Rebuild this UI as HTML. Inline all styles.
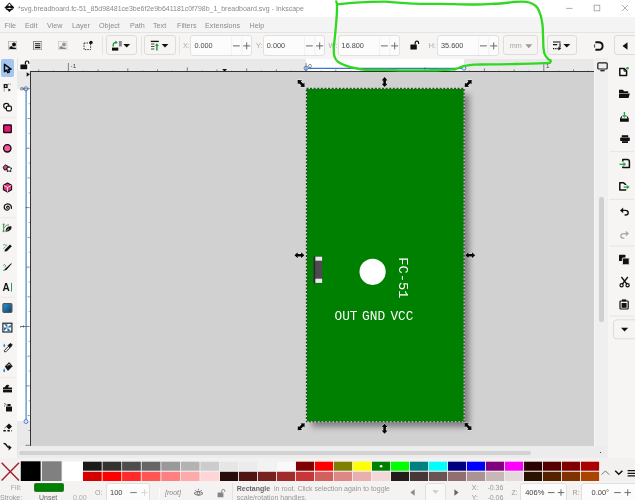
<!DOCTYPE html>
<html><head><meta charset="utf-8"><title>Inkscape</title>
<style>
html,body{margin:0;padding:0;}
body{width:635px;height:500px;overflow:hidden;position:relative;background:#f6f5f4;font-family:"Liberation Sans",sans-serif;color:#555;}
.a{position:absolute;}
.t{position:absolute;white-space:nowrap;line-height:1;}
#title{left:0;top:0;width:635px;height:17.2px;background:#fff;}
#menu{left:0;top:17.2px;width:635px;height:15.4px;background:#f4f4f4;}
#menu .t{font-size:7.2px;top:5.2px;color:#8c8c8c;}
#tb{left:0;top:32px;width:635px;height:26.5px;background:#f6f5f4;border-top:1px solid #e4e4e4;box-sizing:border-box;}
.box{position:absolute;top:35.4px;height:20.2px;box-sizing:border-box;border:1px solid #e2e0de;border-radius:3px;background:#fcfcfc;}
.btn{position:absolute;top:35.4px;height:20px;box-sizing:border-box;border:1px solid #dedcda;border-radius:3px;background:#f6f5f4;}
.lbl{font-size:7.2px;color:#a8a8a8;top:42px;}
.val{font-size:7.3px;color:#4a4a4a;top:41.8px;}
.pm{font-size:11px;color:#888;top:39.5px;font-weight:normal;}
#canvas{left:30.4px;top:71.7px;width:564.1px;height:374px;background:#d1d1d1;overflow:hidden;}
#hr{left:30.4px;top:58.6px;width:564.1px;height:13.4px;z-index:2;background:#e9e9e9;border-bottom:1px solid #333;box-sizing:border-box;overflow:hidden;}
#vr{left:17.3px;top:71px;width:13.7px;height:374.7px;z-index:2;background:#e9e9e9;border-right:1px solid #333;box-sizing:border-box;overflow:hidden;}
#vs{left:594.5px;top:58.3px;width:13.5px;height:400px;background:#efefef;}
#hs{left:17.3px;top:445.7px;width:590px;height:12px;background:#ececec;}
#pal{left:0;top:457.5px;width:635px;height:23.5px;background:#f2f1f0;}
#status{left:0;top:481px;width:635px;height:19px;background:#f4f3f2;}
.st{font-size:7px;color:#999;}
</style></head><body><div id="root" style="position:absolute;left:0;top:0;width:635px;height:500px;will-change:transform">
<!-- title bar -->
<div id="title" class="a">
 <svg class="a" style="left:3.6px;top:2.4px" width="10.8" height="10.8" viewBox="0 0 12 12"><path d="M6 0.5 L11.3 6 Q11.8 7 10.5 7.3 L9 7.6 L10 8.6 L8 9.2 L6 11.5 L4 9.2 L2 8.6 L3 7.6 L1.5 7.3 Q0.2 7 0.7 6 Z" fill="#111"/><path d="M6 2 L8.2 4.3 L7 4 L6 4.8 L5 4 L3.8 4.3 Z" fill="#fff"/><path d="M3 7.2 Q6 5.8 9 7.2 Q6 8.2 3 7.2Z" fill="#fff"/></svg>
 <span class="t" id="ttxt" style="left:18px;top:4.5px;font-size:7.6px;color:#8a8a8a;transform:scaleX(0.919);transform-origin:0 0;">*svg.breadboard.fc-51_85d98481ce3be6f2e9b641181c0f798b_1_breadboard.svg - Inkscape</span>
 <svg class="a" style="left:560px;top:0" width="75" height="18" viewBox="0 0 75 18"><g stroke="#9a9a9a" stroke-width="0.8" fill="none"><path d="M6 8.4H12.6"/><rect x="34.2" y="5.2" width="5.6" height="5.6"/><path d="M62 5L68 11M68 5L62 11"/></g></svg>
</div>
<!-- menu -->
<div id="menu" class="a">
 <span class="t" style="left:4.5px">File</span><span class="t" style="left:25px">Edit</span><span class="t" style="left:47px">View</span><span class="t" style="left:72px">Layer</span><span class="t" style="left:99px">Object</span><span class="t" style="left:130px">Path</span><span class="t" style="left:153px">Text</span><span class="t" style="left:177px">Filters</span><span class="t" style="left:205px">Extensions</span><span class="t" style="left:249.5px">Help</span>
</div>
<!-- toolbar -->
<div id="tb" class="a"></div>
<div id="tbitems">
<svg class="a" style="left:7.8px;top:40.5px" width="9.4" height="9.4" viewBox="0 0 10 10"><rect x="0.5" y="0.5" width="9" height="9" fill="#f0f0f0" stroke="#b5b5b5" stroke-width="0.9"/><circle cx="6.4" cy="3.8" r="2.1" fill="#111"/><path d="M1.6 8.4V6.4L3.8 5.2l1.6 1.6 3 0.4v1.2z" fill="#111"/></svg>
<svg class="a" style="left:32.8px;top:40.5px" width="9.4" height="9.4" viewBox="0 0 10 10"><rect x="0.5" y="0.5" width="9" height="9" fill="#ececec" stroke="#8a8a8a" stroke-width="1"/><path d="M2.2 2.9H7.8M2.2 5H7.8M2.2 7.1H7.8" stroke="#111" stroke-width="1.2"/></svg>
<svg class="a" style="left:58.4px;top:40.5px" width="9.4" height="9.4" viewBox="0 0 10 10"><rect x="0.5" y="0.5" width="9" height="9" fill="#f2f2f2" stroke="#cfcfcf" stroke-width="0.9"/><circle cx="6.4" cy="3.8" r="2.1" fill="#999"/><path d="M1.6 8.4V6.4L3.8 5.2l1.6 1.6 3 0.4v1.2z" fill="#888"/></svg>
<svg class="a" style="left:82.6px;top:40px" width="11" height="11" viewBox="0 0 11 11"><rect x="1" y="3" width="6.6" height="6.6" fill="none" stroke="#222" stroke-width="0.9" stroke-dasharray="1.5 1"/><circle cx="8" cy="2.4" r="1.7" fill="#111"/></svg>
<div class="a" style="left:102.0px;top:36px;width:0.8px;height:19px;background:#e6e4e2"></div>
<div class="a" style="left:141.0px;top:36px;width:0.8px;height:19px;background:#e6e4e2"></div>
<div class="a" style="left:179.3px;top:36px;width:0.8px;height:19px;background:#e6e4e2"></div>
<div class="btn" style="left:105.7px;width:31.8px;"></div>
<svg class="a" style="left:110px;top:39px" width="22" height="13" viewBox="110 39 22 13"><rect x="112" y="47.6" width="6.3" height="3" fill="#111"/><rect x="118.9" y="41" width="2.9" height="5.5" fill="#888"/><path d="M113.2 46.6V45Q113.2 42.6 116 42.4" stroke="#1e9e3c" stroke-width="1.4" fill="none"/><path d="M115.4 40.6L117.8 42.4L115.4 44.2Z" fill="#1e9e3c"/><path d="M123.3 43.9h6.8l-3.4 3.5z" fill="#111"/></svg>
<div class="btn" style="left:144.3px;width:31.4px;"></div>
<svg class="a" style="left:148px;top:39px" width="22" height="13" viewBox="148 39 22 13"><path d="M150.8 41.4H158.8" stroke="#111" stroke-width="1.3"/><path d="M151 44H154.4M151 46.5H154.4M151 49H154.4" stroke="#333" stroke-width="0.9"/><path d="M156.9 50.4V45" stroke="#1e9e3c" stroke-width="1.5"/><path d="M154.8 45.8L156.9 43.2L159 45.8Z" fill="#1e9e3c"/><path d="M161.6 43.9h6.8l-3.4 3.5z" fill="#111"/></svg>
<span class="t lbl" style="left:183.0px">X:</span>
<div class="box" style="left:190.4px;width:61.8px;"></div>
<span class="t val" style="left:194.4px">0.000</span>
<svg class="a" style="left:231.2px;top:35.5px" width="22" height="20" viewBox="0 0 22 20"><path d="M0.6 1V19M10.8 1V19" stroke="#efeeed" stroke-width="0.8"/><path d="M2 9.9H8.8" stroke="#6a6a6a" stroke-width="1"/><path d="M12.2 9.9H19.2M15.7 6.4V13.4" stroke="#6a6a6a" stroke-width="1"/></svg>
<span class="t lbl" style="left:256.0px">Y:</span>
<div class="box" style="left:262.8px;width:61.8px;"></div>
<span class="t val" style="left:266.8px">0.000</span>
<svg class="a" style="left:303.6px;top:35.5px" width="22" height="20" viewBox="0 0 22 20"><path d="M0.6 1V19M10.8 1V19" stroke="#efeeed" stroke-width="0.8"/><path d="M2 9.9H8.8" stroke="#6a6a6a" stroke-width="1"/><path d="M12.2 9.9H19.2M15.7 6.4V13.4" stroke="#6a6a6a" stroke-width="1"/></svg>
<span class="t lbl" style="left:328.6px">W:</span>
<div class="box" style="left:337.6px;width:62.4px;"></div>
<span class="t val" style="left:341.6px">16.800</span>
<svg class="a" style="left:379.0px;top:35.5px" width="22" height="20" viewBox="0 0 22 20"><path d="M0.6 1V19M10.8 1V19" stroke="#efeeed" stroke-width="0.8"/><path d="M2 9.9H8.8" stroke="#6a6a6a" stroke-width="1"/><path d="M12.2 9.9H19.2M15.7 6.4V13.4" stroke="#6a6a6a" stroke-width="1"/></svg>
<span class="t lbl" style="left:428.8px">H:</span>
<div class="box" style="left:437.0px;width:62.0px;"></div>
<span class="t val" style="left:441.0px">35.600</span>
<svg class="a" style="left:478.0px;top:35.5px" width="22" height="20" viewBox="0 0 22 20"><path d="M0.6 1V19M10.8 1V19" stroke="#efeeed" stroke-width="0.8"/><path d="M2 9.9H8.8" stroke="#6a6a6a" stroke-width="1"/><path d="M12.2 9.9H19.2M15.7 6.4V13.4" stroke="#6a6a6a" stroke-width="1"/></svg>
<svg class="a" style="left:410.4px;top:40.4px" width="10" height="10" viewBox="0 0 10 10"><rect x="0.4" y="4.6" width="6.4" height="4.8" rx="0.5" fill="#111"/><path d="M5.2 4.6V3Q5.2 1.2 6.9 1.2Q8.6 1.2 8.6 3V4" stroke="#111" stroke-width="1.2" fill="none"/></svg>
<div class="btn" style="left:502.7px;width:35.5px;"></div>
<span class="t lbl" style="left:509.8px;color:#a6a6a6">mm</span>
<svg class="a" style="left:524.6px;top:43.6px" width="8" height="5" viewBox="0 0 8 5"><path d="M0.3 0.3h7L3.8 4.2z" fill="#9a9a9a"/></svg>
<div class="btn" style="left:546.8px;width:29.8px;"></div>
<svg class="a" style="left:551.5px;top:39px" width="22" height="13" viewBox="0 0 22 13"><path d="M1 3H8.6M1 5.6H5.2M8 4.2V8.6" stroke="#111" stroke-width="1.1" fill="none"/><path d="M1 9.6H6.5" stroke="#111" stroke-width="1.3" stroke-dasharray="1.3 0.9"/><path d="M6.4 7.8l2.8 1.8-2.8 1.8z" fill="#111"/><path d="M11.4 5h6.8l-3.4 3.5z" fill="#111"/></svg>
<svg class="a" style="left:592px;top:39.5px" width="13" height="12" viewBox="0 0 13 12"><path d="M3.4 2.2H6.6Q10.6 2.2 10.6 6Q10.6 9.8 6.6 9.8H3.4" stroke="#111" stroke-width="1.9" fill="none"/><path d="M3.2 4.6Q1.6 5 2.6 6Q3.6 6.8 2 7.4" stroke="#111" stroke-width="0.9" fill="none"/></svg>
<div class="btn" style="left:614px;width:26px;"></div>
<svg class="a" style="left:621.5px;top:41.5px" width="6" height="8" viewBox="0 0 6 8"><path d="M5.5 0.3V7.7L0.5 4z" fill="#111"/></svg>
</div>

<!-- rulers -->
<div id="hr" class="a">
 <div class="a" style="left:276.1px;top:0;width:157.8px;height:13px;background:#fff"></div>
 <svg class="a" style="left:0;top:0" width="565" height="14" viewBox="30.4 58.6 565 14"><path d="M306.5 68H464.3" stroke="#3b78c6" stroke-width="1.1"/><circle cx="306.5" cy="67.8" r="2" fill="#dfe9f6" stroke="#3b78c6" stroke-width="0.9"/><circle cx="464.3" cy="67.8" r="2" fill="#dfe9f6" stroke="#3b78c6" stroke-width="0.9"/><path d="M39.1 71.2V69.1M53.9 71.2V70.2M68.8 71.2V62.6M83.7 71.2V70.2M98.5 71.2V69.1M113.4 71.2V70.2M128.2 71.2V68.0M143.1 71.2V70.2M157.9 71.2V69.1M172.8 71.2V70.2M187.7 71.2V67.0M202.5 71.2V70.2M217.4 71.2V69.1M232.2 71.2V70.2M247.1 71.2V68.0M261.9 71.2V70.2M276.8 71.2V69.1M291.6 71.2V70.2M306.5 71.2V62.6M321.4 71.2V70.2M336.2 71.2V69.1M351.1 71.2V70.2M365.9 71.2V68.0M380.8 71.2V70.2M395.6 71.2V69.1M410.5 71.2V70.2M425.4 71.2V67.0M440.2 71.2V70.2M455.1 71.2V69.1M469.9 71.2V70.2M484.8 71.2V68.0M499.6 71.2V70.2M514.5 71.2V69.1M529.3 71.2V70.2M544.2 71.2V62.6M559.1 71.2V70.2M573.9 71.2V69.1M588.8 71.2V70.2" stroke="#3a3a3a" stroke-width="0.6" fill="none"/><text x="71.0" y="67.2" font-size="6.2" fill="#444" font-family="Liberation Sans, sans-serif">-1</text><text x="308.7" y="67.2" font-size="6.2" fill="#444" font-family="Liberation Sans, sans-serif">0</text><text x="546.4" y="67.2" font-size="6.2" fill="#444" font-family="Liberation Sans, sans-serif">1</text><path d="M222.6 68.6h4.8l-2.4 2.8z" fill="#111"/></svg>
</div>
<div id="vr" class="a">
 <div class="a" style="left:0;top:17.8px;width:13px;height:332.7px;background:#fff"></div>
 <svg class="a" style="left:0;top:0" width="14" height="375" viewBox="17.3 71 14 375"><path d="M26.4 88.8V421.5" stroke="#3b78c6" stroke-width="1.1"/><circle cx="26.3" cy="88.8" r="2" fill="#dfe9f6" stroke="#3b78c6" stroke-width="0.9"/><circle cx="26.3" cy="421.5" r="2" fill="#dfe9f6" stroke="#3b78c6" stroke-width="0.9"/><path d="M30 73.9H29.0M30 88.8H21.4M30 103.7H29.0M30 118.5H27.9M30 133.4H29.0M30 148.2H26.8M30 163.1H29.0M30 177.9H27.9M30 192.8H29.0M30 207.6H25.8M30 222.5H29.0M30 237.4H27.9M30 252.2H29.0M30 267.1H26.8M30 281.9H29.0M30 296.8H27.9M30 311.6H29.0M30 326.5H21.4M30 341.4H29.0M30 356.2H27.9M30 371.1H29.0M30 385.9H26.8M30 400.8H29.0M30 415.6H27.9M30 430.5H29.0M30 445.3H25.8" stroke="#3a3a3a" stroke-width="0.6" fill="none"/><text transform="translate(24.4 87.0) rotate(-90)" font-size="6.2" fill="#444" font-family="Liberation Sans, sans-serif" text-anchor="end">0</text><text transform="translate(24.4 324.7) rotate(-90)" font-size="6.2" fill="#444" font-family="Liberation Sans, sans-serif" text-anchor="end">1</text><path d="M27 72.2v4.6l3-2.3z" fill="#111"/></svg>
</div>
<!-- corner lock -->
<svg class="a" style="left:20.3px;top:60.3px;z-index:3" width="10" height="10" viewBox="0 0 10 10"><rect x="0.4" y="4.6" width="6.8" height="4.6" rx="0.5" fill="#111"/><path d="M5.4 4.6V2.8Q5.4 1 7.1 1Q8.8 1 8.8 2.8V3.8" stroke="#111" stroke-width="1.2" fill="none"/></svg>

<!-- canvas -->
<div id="canvas" class="a">
 <svg class="a" style="left:0;top:0" width="565" height="375" viewBox="30.4 71.7 565 375" id="cv">
  <defs>
   <linearGradient id="shr" x1="0" x2="1" y1="0" y2="0"><stop offset="0" stop-color="#000" stop-opacity="0.5"/><stop offset="0.4" stop-color="#000" stop-opacity="0.17"/><stop offset="1" stop-color="#000" stop-opacity="0"/></linearGradient>
   <linearGradient id="shb" x1="0" x2="0" y1="0" y2="1"><stop offset="0" stop-color="#000" stop-opacity="0.5"/><stop offset="0.4" stop-color="#000" stop-opacity="0.17"/><stop offset="1" stop-color="#000" stop-opacity="0"/></linearGradient>
   <filter id="blur" x="-10%" y="-5%" width="120%" height="110%"><feGaussianBlur stdDeviation="3"/></filter>
   <g id="ar"><path d="M0 -5L3 -1.7H1.3V1.7H3L0 5L-3 1.7H-1.3V-1.7H-3Z" fill="#050505" stroke="#fff" stroke-opacity="0.6" stroke-width="1" paint-order="stroke"/></g>
  </defs>
    <rect x="312" y="94" width="157.5" height="332.5" fill="#000" fill-opacity="0.4" filter="url(#blur)"/>
  <rect x="307" y="88.2" width="157.5" height="333.3" fill="#008000"/>
  <rect x="306.8" y="88" width="157.7" height="333.5" fill="none" stroke="#fff" stroke-opacity="0.85" stroke-width="0.9"/>
  <rect x="306.8" y="88" width="157.7" height="333.5" fill="none" stroke="#0a0a0a" stroke-width="0.9" stroke-dasharray="2.1 1.5"/>
  <!-- component -->
  <rect x="314" y="256.2" width="8.6" height="26.8" fill="#4b4b50"/>
  <rect x="314" y="256.2" width="1.6" height="26.8" fill="#2a2a2c"/>
  <rect x="315.8" y="256.4" width="6.7" height="4" fill="#e6ece6"/>
  <rect x="315.8" y="278.4" width="6.7" height="4.2" fill="#e6ece6"/>
  <circle cx="373" cy="271.5" r="13.1" fill="#fff"/>
  <g font-family="Liberation Mono, monospace" font-size="12.8" fill="#fff">
  <text x="334.9" y="319.6">OUT</text><text x="362.5" y="319.6">GND</text><text x="390.8" y="319.6">VCC</text>
  <text transform="translate(399.6 257) rotate(90)" font-size="13.7">FC-51</text>
  </g>
  <!-- handles -->
  <use href="#ar" transform="translate(301.5 83.2) rotate(-45)"/>
  <use href="#ar" transform="translate(385 81.8)"/>
  <use href="#ar" transform="translate(468.6 83.2) rotate(45)"/>
  <use href="#ar" transform="translate(299.8 255) rotate(90)"/>
  <use href="#ar" transform="translate(470.6 255) rotate(90)"/>
  <use href="#ar" transform="translate(301.6 426.4) rotate(45)"/>
  <use href="#ar" transform="translate(385 428.4)"/>
  <use href="#ar" transform="translate(468.4 426.2) rotate(-45)"/>
 </svg>
</div>

<!-- scrollbars -->
<div id="vs" class="a"><div class="a" style="left:4.5px;top:139px;width:4.5px;height:125px;background:#cfcfcf;border-radius:2px"></div></div>
<div id="hs" class="a"><div class="a" style="left:2px;top:5px;width:512px;height:4.5px;background:#d2d2d2;border-radius:2px"></div></div>
<svg class="a" style="left:596.5px;top:61.5px" width="11" height="10" viewBox="0 0 11 10"><rect x="0.8" y="0.8" width="9.4" height="6.2" rx="1" fill="none" stroke="#1a1a1a" stroke-width="1.2"/><path d="M3.4 8.7H7.6" stroke="#1a1a1a" stroke-width="1.3"/></svg>

<div class="a" style="left:599.5px;top:451.7px;width:1.8px;height:1.8px;border-radius:1px;background:#111"></div>
<!-- left toolbox -->
<div class="a" id="ltb" style="left:0;top:58.3px;width:16.5px;height:399px;background:#f6f5f4;border-right:1px solid #e6e4e2"></div>
<div class="a" style="left:0.9px;top:59.3px;width:13.1px;height:18px;background:#a3c6ee;border-radius:2px"></div>

<!-- right toolbar -->
<div class="a" id="rtb" style="left:608px;top:58.3px;width:27px;height:399px;background:#f6f5f4"></div>

<!-- left tools -->
<svg class="a" style="left:0;top:58px" width="17" height="400" viewBox="0 58 17 400">
 <!-- selector -->
 <path d="M4.5 64.3V71.7L6.5 70.1L7.9 72.7L9.5 71.9L8.2 69.4L11 69.2Z" fill="#b9d4f3" stroke="#050a18" stroke-width="1.5" stroke-linejoin="round"/>
 <!-- node -->
 <rect x="4.3" y="84.7" width="2.7" height="2.7" fill="#fff" stroke="#111" stroke-width="1.3"/>
 <path d="M4.2 88.4V91.6" stroke="#444" stroke-width="0.7" stroke-dasharray="1.2 0.6"/>
 <path d="M7.8 84.2H11" stroke="#555" stroke-width="0.7" stroke-dasharray="1.2 0.7"/>
 <path d="M8.4 88.6L11 90.1L8.4 91.6Z" fill="#111"/>
 <!-- shape builder -->
 <circle cx="6.3" cy="106" r="2.6" fill="#fff" stroke="#111" stroke-width="1.2"/>
 <rect x="6.4" y="106.2" width="5" height="4.6" rx="1.2" fill="#fff" stroke="#111" stroke-width="1.2"/>
 <path d="M0.5 117.4H15" stroke="#e8e6e4" stroke-width="0.8"/>
 <!-- rect -->
 <rect x="3.7" y="125" width="7.6" height="7.5" rx="0.6" fill="#e01b74" stroke="#25060f" stroke-width="1.3"/>
 <!-- circle -->
 <circle cx="7.3" cy="148.3" r="3.7" fill="#ef5a9d" stroke="#14060c" stroke-width="1.3"/>
 <!-- star -->
 <path d="M5.4 164.8L8 166.4L7.6 169.6L4.4 170L3.2 167.2Z" fill="#e34b90" stroke="#111" stroke-width="1" stroke-linejoin="round"/>
 <path d="M9 166.2L10 168L12 168.3L10.6 169.7L10.9 171.7L9 170.8L7.2 171.7L7.5 169.7L6.1 168.3L8.1 168Z" fill="#fff" stroke="#111" stroke-width="0.9" stroke-linejoin="round"/>
 <!-- 3d box -->
 <path d="M7.5 183L11.6 185.2V189.8L7.5 192L3.4 189.8V185.2Z" fill="#e0357f" stroke="#111" stroke-width="1.1" stroke-linejoin="round"/>
 <path d="M3.6 185.3L7.5 187.5L11.4 185.3M7.5 187.5V191.8" stroke="#fff" stroke-width="0.8" fill="none"/>
 <!-- spiral -->
 <path d="M7.4 208.2Q6.4 207.8 6.8 206.8Q7.6 205.8 8.8 206.6Q9.9 207.8 8.8 209.4Q7.2 210.8 5.2 209.4Q3.4 207.4 4.8 205.2Q6.8 203.2 9.4 204.2Q11.8 205.6 11.4 208.4" fill="none" stroke="#111" stroke-width="1.2" stroke-linecap="round"/>
 <path d="M0.5 217.6H15" stroke="#e8e6e4" stroke-width="0.8"/>
 <!-- pen -->
 <path d="M3.6 225V231" stroke="#26a344" stroke-width="1"/>
 <circle cx="3.6" cy="224.6" r="1" fill="#26a344"/><circle cx="3.6" cy="231.2" r="1" fill="#26a344"/>
 <path d="M4 228Q6 224.2 9 224.8" stroke="#666" stroke-width="0.8" fill="none"/>
 <path d="M5.6 231.8Q5.4 228.2 8.6 226.6L11.4 226.2Q12 228 10.6 229.8Q8.4 232 5.6 231.8Z" fill="#111"/>
 <path d="M6.4 231L9 228.6" stroke="#fff" stroke-width="0.7"/>
 <!-- pencil -->
 <path d="M4.4 251.6L5 249.4L10 244.4L11.8 246.2L6.8 251.2Z" fill="#111"/>
 <path d="M3.2 245.2Q4.2 243.6 5.2 245Q6 246.2 7.2 245" stroke="#26a344" stroke-width="0.9" fill="none"/>
 <path d="M3.4 248.6L5.4 246.8" stroke="#26a344" stroke-width="0.9"/>
 <!-- calligraphy -->
 <path d="M4.2 270.8L5.4 268.6L11.2 263.2L11.8 263.8L6.6 269.8Z" fill="#111"/>
 <path d="M3.2 265.6Q4.4 263.6 5.4 265.2Q6 266.4 4.4 267.4" stroke="#26a344" stroke-width="0.9" fill="none"/>
 <path d="M3 270.6L5 269.4" stroke="#26a344" stroke-width="0.9"/>
 <!-- text -->
 <text x="2.4" y="291" font-family="Liberation Sans, sans-serif" font-weight="bold" font-size="10" fill="#111">A</text>
 <path d="M11.5 282.8V291.6" stroke="#26a344" stroke-width="1"/>
 <path d="M0.5 297.4H15" stroke="#e8e6e4" stroke-width="0.8"/>
 <!-- gradient -->
 <defs><linearGradient id="gr1" x1="0" y1="0" x2="1" y2="1"><stop offset="0" stop-color="#2f9be0"/><stop offset="1" stop-color="#063b66"/></linearGradient></defs>
 <rect x="2.9" y="303.6" width="9" height="8.8" rx="1.2" fill="url(#gr1)" stroke="#555" stroke-width="1.2"/>
 <!-- mesh -->
 <rect x="2.9" y="323.2" width="9" height="8.8" fill="#fff" stroke="#111" stroke-width="1.1"/>
 <path d="M7.4 327.6L4 324.2H7.4ZM7.4 327.6L10.8 324.4V327.6ZM7.4 327.6L10.8 331H7.4ZM7.4 327.6L4 331V327.6Z" fill="#1a6fb5"/>
 <!-- dropper -->
 <path d="M4.3 343.6Q6.2 346.4 4.3 347.2Q2.4 346.4 4.3 343.6Z" fill="#1a86dc"/>
 <path d="M4.6 351.8L4.4 350.4L8.4 346.4L9.8 347.8L5.8 351.8Z" fill="#fff" stroke="#111" stroke-width="0.9"/>
 <path d="M8 345.6L9.6 344L11 343.6L12 344.6L11.6 346L10 347.6Z" fill="#111" stroke="#111" stroke-width="0.8" stroke-linejoin="round"/>
 <!-- bucket -->
 <path d="M4.2 368.2Q6.2 371.2 4.2 372.2Q2.2 371.2 4.2 368.2Z" fill="#1a86dc"/>
 <path d="M5.2 366.4L9.2 362.6L12.2 366.2L8 370.4Z" fill="#111" stroke="#111" stroke-width="0.8" stroke-linejoin="round"/>
 <path d="M7.4 365.8L9.2 364.2L10.2 365.4" stroke="#fff" stroke-width="0.8" fill="none"/>
 <path d="M0.5 377.4H15" stroke="#e8e6e4" stroke-width="0.8"/>
 <!-- tweak -->
 <path d="M3 389.4V387.6Q5 387.6 5.6 386Q6.8 384 9.6 385.2Q8 385.8 8.4 387.4H12V389.4Z" fill="#111"/>
 <rect x="3" y="390" width="9" height="2.4" fill="#111"/>
 <!-- spray -->
 <rect x="6" y="406.6" width="6" height="5" rx="0.5" fill="#111"/>
 <rect x="7.4" y="404" width="3.2" height="2" fill="#111"/>
 <path d="M4.2 403.6h1M5.8 405h1M4 406h1M5 404.2h0.8" stroke="#333" stroke-width="0.8"/>
 <!-- eraser -->
 <path d="M9 423.4L12 426.4L9 429.4L6 426.4Z" fill="#111"/>
 <path d="M4.4 428.2L6.4 426.4" stroke="#666" stroke-width="1"/>
 <path d="M3.4 430.8H12" stroke="#111" stroke-width="1.6" stroke-dasharray="2.4 1.6"/>
 <!-- connector -->
 <path d="M3.6 443.6Q5.4 443.4 6.4 445.2Q7.4 447.4 9.6 447.4" stroke="#111" stroke-width="1.5" fill="none"/>
 <path d="M8.6 445L11.6 447.6L8.6 450.4Z" fill="#111"/>
</svg>

<!-- right tools -->
<svg class="a" style="left:608px;top:58px" width="27" height="400" viewBox="608 58 27 400">
 <!-- new -->
 <path d="M619.8 68.6H624.2L626.6 71V75.6H619.8Z" fill="#fff" stroke="#111" stroke-width="1.5" stroke-linejoin="round"/>
 <path d="M624 68.6V71.2H626.6" fill="none" stroke="#111" stroke-width="0.9"/>
 <circle cx="627.5" cy="68.3" r="1.3" fill="#26a344"/>
 <!-- open -->
 <path d="M619 89.8H623L624 91.2H628.2V93H619Z" fill="#111"/>
 <path d="M619 93.5H629.8L628.6 98H619Z" fill="#111"/>
 <!-- save -->
 <path d="M624.4 112V116" stroke="#26a344" stroke-width="1.4"/>
 <path d="M622 115.2L624.4 117.8L626.8 115.2Z" fill="#26a344"/>
 <path d="M620 121.8V118.6L621.4 116.2H622.4L621.4 118.6H627.4L626.4 116.2H627.4L628.8 118.6V121.8Z" fill="#111"/>
 <!-- print -->
 <rect x="621.8" y="135.2" width="6.4" height="2" fill="#111"/>
 <rect x="620.2" y="137.6" width="9.6" height="3.4" rx="0.6" fill="#111"/>
 <rect x="622" y="141.2" width="6" height="1.8" fill="#111"/>
 <path d="M609.5 151.6H634" stroke="#e2e0de" stroke-width="0.8"/>
 <!-- import -->
 <path d="M622.8 161.4V159.6H627.2Q629.4 159.6 629.4 161.8V167.6H622.8V166.6" fill="none" stroke="#111" stroke-width="1.5" stroke-linejoin="round"/>
 <path d="M619.6 164.3H624" stroke="#26a344" stroke-width="1.3"/>
 <path d="M623.4 162L626.2 164.3L623.4 166.6Z" fill="#26a344"/>
 <!-- export -->
 <path d="M625.6 185V184.6L623.6 182.8H619.8V190H625.6V189.2" fill="none" stroke="#111" stroke-width="1.5" stroke-linejoin="round"/>
 <path d="M623.6 187.1H627.6" stroke="#26a344" stroke-width="1.3"/>
 <path d="M626.8 184.9L629.6 187.1L626.8 189.3Z" fill="#26a344"/>
 <path d="M609.5 199.4H634" stroke="#e2e0de" stroke-width="0.8"/>
 <!-- undo -->
 <path d="M622 210.4H625.4Q628.2 210.4 628.2 212.7Q628.2 215 625.4 215H624.6" fill="none" stroke="#111" stroke-width="1.4"/>
 <path d="M623.2 207.6L620 210.4L623.2 213.2Z" fill="#111"/>
 <!-- redo -->
 <path d="M627 233.6H623.6Q620.8 233.6 620.8 235.9Q620.8 238.2 623.6 238.2H624.4" fill="none" stroke="#a8a8a8" stroke-width="1.3"/>
 <path d="M625.8 230.8L629 233.6L625.8 236.4Z" fill="#a8a8a8"/>
 <path d="M609.5 246H634" stroke="#e2e0de" stroke-width="0.8"/>
 <!-- copy -->
 <rect x="619" y="254.8" width="6.4" height="6.2" rx="0.5" fill="#111"/>
 <rect x="622.4" y="258" width="6.8" height="6.8" rx="0.5" fill="#111" stroke="#f6f5f4" stroke-width="0.9"/>
 <!-- cut -->
 <path d="M621.4 277L626.8 284M627.8 277L622.4 284" stroke="#111" stroke-width="1.3"/>
 <circle cx="621.6" cy="285.2" r="1.6" fill="none" stroke="#111" stroke-width="1.2"/>
 <circle cx="627.6" cy="285.2" r="1.6" fill="none" stroke="#111" stroke-width="1.2"/>
 <!-- paste -->
 <rect x="620" y="301" width="8.2" height="8" rx="0.8" fill="none" stroke="#111" stroke-width="1.2"/>
 <rect x="622" y="299.4" width="4.2" height="2" fill="#111"/>
 <rect x="621.6" y="303" width="5" height="4.8" fill="#111"/>
 <path d="M609.5 316H634" stroke="#e2e0de" stroke-width="0.8"/>
 <rect x="613.5" y="319.8" width="26" height="19" rx="3" fill="#f6f5f4" stroke="#dedcda" stroke-width="1"/>
 <path d="M621 327.8H628.2L624.6 331.6Z" fill="#111"/>
</svg>

<!-- palette -->
<div id="pal" class="a"></div>
<svg class="a" style="left:0;top:457.5px" width="635" height="24" viewBox="0 457.5 635 24"><path d="M1.6 462.2L19 480M19 462.2L1.6 480" stroke="#a51d2d" stroke-width="1.4" fill="none"/><rect x="20.8" y="460.8" width="19.8" height="20" fill="#000"/><rect x="42" y="460.8" width="19.6" height="20" fill="#808080"/><rect x="62.4" y="460.8" width="20.4" height="20" fill="#fff"/><rect x="83.0" y="461.2" width="18.7" height="9" fill="#1a1a1a"/><rect x="83.0" y="471.3" width="18.7" height="9.4" fill="#d40000"/><rect x="102.6" y="461.2" width="18.7" height="9" fill="#333333"/><rect x="102.6" y="471.3" width="18.7" height="9.4" fill="#ff0000"/><rect x="122.1" y="461.2" width="18.7" height="9" fill="#4d4d4d"/><rect x="122.1" y="471.3" width="18.7" height="9.4" fill="#ff2a2a"/><rect x="141.7" y="461.2" width="18.7" height="9" fill="#666666"/><rect x="141.7" y="471.3" width="18.7" height="9.4" fill="#ff5555"/><rect x="161.3" y="461.2" width="18.7" height="9" fill="#999999"/><rect x="161.3" y="471.3" width="18.7" height="9.4" fill="#ff8080"/><rect x="180.8" y="461.2" width="18.7" height="9" fill="#b3b3b3"/><rect x="180.8" y="471.3" width="18.7" height="9.4" fill="#ffaaaa"/><rect x="200.4" y="461.2" width="18.7" height="9" fill="#cccccc"/><rect x="200.4" y="471.3" width="18.7" height="9.4" fill="#ffd5d5"/><rect x="220.0" y="461.2" width="18.1" height="9" fill="#e6e6e6"/><rect x="220.0" y="471.3" width="18.1" height="9.4" fill="#280b0b"/><rect x="239.0" y="461.2" width="18.1" height="9" fill="#ececec"/><rect x="239.0" y="471.3" width="18.1" height="9.4" fill="#501616"/><rect x="258.0" y="461.2" width="18.1" height="9" fill="#f2f2f2"/><rect x="258.0" y="471.3" width="18.1" height="9.4" fill="#782121"/><rect x="277.0" y="461.2" width="18.1" height="9" fill="#f9f9f9"/><rect x="277.0" y="471.3" width="18.1" height="9.4" fill="#a02c2c"/><rect x="296.0" y="461.2" width="18.1" height="9" fill="#800000"/><rect x="296.0" y="471.3" width="18.1" height="9.4" fill="#c83737"/><rect x="315.0" y="461.2" width="18.1" height="9" fill="#ff0000"/><rect x="315.0" y="471.3" width="18.1" height="9.4" fill="#d35f5f"/><rect x="334.0" y="461.2" width="18.1" height="9" fill="#808000"/><rect x="334.0" y="471.3" width="18.1" height="9.4" fill="#de8787"/><rect x="353.0" y="461.2" width="18.1" height="9" fill="#ffff00"/><rect x="353.0" y="471.3" width="18.1" height="9.4" fill="#e9afaf"/><rect x="372.0" y="461.2" width="18.1" height="9" fill="#008000"/><rect x="372.0" y="471.3" width="18.1" height="9.4" fill="#f4d7d7"/><rect x="391.0" y="461.2" width="18.1" height="9" fill="#00ff00"/><rect x="391.0" y="471.3" width="18.1" height="9.4" fill="#241c1c"/><rect x="410.0" y="461.2" width="18.1" height="9" fill="#008080"/><rect x="410.0" y="471.3" width="18.1" height="9.4" fill="#483737"/><rect x="429.0" y="461.2" width="18.1" height="9" fill="#00ffff"/><rect x="429.0" y="471.3" width="18.1" height="9.4" fill="#6c5353"/><rect x="448.0" y="461.2" width="18.1" height="9" fill="#000080"/><rect x="448.0" y="471.3" width="18.1" height="9.4" fill="#916f6f"/><rect x="467.0" y="461.2" width="18.1" height="9" fill="#0000ff"/><rect x="467.0" y="471.3" width="18.1" height="9.4" fill="#ac9393"/><rect x="486.0" y="461.2" width="18.1" height="9" fill="#800080"/><rect x="486.0" y="471.3" width="18.1" height="9.4" fill="#c8b7b7"/><rect x="505.0" y="461.2" width="18.1" height="9" fill="#ff00ff"/><rect x="505.0" y="471.3" width="18.1" height="9.4" fill="#e3dbdb"/><rect x="524.0" y="461.2" width="18.1" height="9" fill="#2b0000"/><rect x="524.0" y="471.3" width="18.1" height="9.4" fill="#2b1100"/><rect x="543.0" y="461.2" width="18.1" height="9" fill="#550000"/><rect x="543.0" y="471.3" width="18.1" height="9.4" fill="#552200"/><rect x="562.0" y="461.2" width="18.1" height="9" fill="#800000"/><rect x="562.0" y="471.3" width="18.1" height="9.4" fill="#803300"/><rect x="581.0" y="461.2" width="18.1" height="9" fill="#aa0000"/><rect x="581.0" y="471.3" width="18.1" height="9.4" fill="#aa4400"/><circle cx="381.1" cy="465.7" r="1.3" fill="#fff"/><path d="M601.6 474.2L605.4 470.4L609.2 474.2" stroke="#777" stroke-width="1" fill="none"/><path d="M615.2 470.2L618.8 473.8L622.4 470.2" stroke="#111" stroke-width="1.5" fill="none"/><path d="M627.6 470.2H635M627.6 472.8H635M627.6 475.4H635" stroke="#111" stroke-width="1.2" fill="none"/></svg>
<!-- status -->
<div id="status" class="a"></div>
<span class="t st" style="left:10.8px;top:484.4px;color:#a6a6a6">Fill:</span>
<span class="t st" style="left:0.0px;top:493.8px;">Stroke:</span>
<div class="a" style="left:33.5px;top:482.8px;width:30.5px;height:9px;background:#008000;border:0.6px solid #2b7a2b;border-radius:1.5px;box-sizing:border-box"></div>
<span class="t st" style="left:39.0px;top:493.8px;color:#6a6a6a">Unset</span>
<span class="t st" style="left:73.0px;top:493.8px;color:#aaa">0.00</span>
<span class="t st" style="left:95.0px;top:488.6px;">O:</span>
<div class="a" style="left:105.8px;top:482.6px;width:44.5px;height:21px;background:#fcfcfc;border:1px solid #e2e0de;border-radius:3px;box-sizing:border-box"></div>
<span class="t st" style="left:110.0px;top:488.9px;color:#444;font-size:7.5px">100</span>
<svg class="a" style="left:0;top:482px;" width="635" height="18" viewBox="0 482 635 18"><path d="M130.2 492.6H136.8" stroke="#7a7a7a" stroke-width="1"/><path d="M141.4 492.6H147.8M144.6 489.4V495.8" stroke="#d4d4d4" stroke-width="1"/></svg>
<span class="t st" style="left:165.0px;top:489.0px;font-style:italic;color:#8a8a8a">[root]</span>
<div class="a" style="left:158.6px;top:486.5px;width:1.7px;height:11px;background:#fcfcfc"></div>
<svg class="a" style="left:192.6px;top:488px" width="11" height="9" viewBox="0 0 11 9"><path d="M1 5.4Q5.5 1.2 10 5.4Q5.5 9.2 1 5.4Z" fill="none" stroke="#666" stroke-width="0.9"/><circle cx="5.5" cy="5.3" r="1.4" fill="none" stroke="#666" stroke-width="0.9"/><path d="M2.4 2l0.8 1.1M5.5 0.8v1.4M8.6 2l-0.8 1.1" stroke="#666" stroke-width="0.8"/></svg>
<svg class="a" style="left:217px;top:487.6px" width="9" height="10" viewBox="0 0 9 10"><rect x="0.6" y="4.6" width="5.8" height="4.6" rx="0.5" fill="#858585"/><path d="M4.8 4.6V3Q4.8 1.4 6.3 1.4Q7.8 1.4 7.8 3V3.8" stroke="#858585" stroke-width="1" fill="none"/></svg>
<div class="a" style="left:232.4px;top:483px;width:0.8px;height:17px;background:#e4e2e0"></div>
<span class="t st" style="left:236.7px;top:484.6px;color:#999"><b style="color:#666">Rectangle</b>&nbsp; in root. Click selection again to toggle</span>
<span class="t st" style="left:236.7px;top:494.3px;">scale/rotation handles.</span>
<svg class="a" style="left:409.5px;top:488.5px" width="5" height="7" viewBox="0 0 5 7"><path d="M4.6 0.3V6.7L0.4 3.5z" fill="#888"/></svg>
<div class="a" style="left:424.5px;top:482.6px;width:21px;height:21px;background:#f8f8f7;border:1px solid #e2e0de;border-radius:3px;box-sizing:border-box"></div>
<svg class="a" style="left:431.5px;top:490px" width="7" height="4" viewBox="0 0 7 4"><path d="M0.3 0.3h6.4L3.5 3.8z" fill="#ccc"/></svg>
<svg class="a" style="left:453.5px;top:488.5px" width="5" height="7" viewBox="0 0 5 7"><path d="M0.4 0.3V6.7L4.6 3.5z" fill="#666"/></svg>
<span class="t st" style="left:471.7px;top:483.8px;">X:</span>
<span class="t st" style="left:471.7px;top:494.0px;">Y:</span>
<span class="t st" style="left:487.4px;top:483.8px;">-0.36</span>
<span class="t st" style="left:487.4px;top:494.0px;">-0.06</span>
<span class="t st" style="left:511.4px;top:488.6px;">Z:</span>
<div class="a" style="left:519.7px;top:482.6px;width:47.5px;height:21px;background:#fcfcfc;border:1px solid #e2e0de;border-radius:3px;box-sizing:border-box"></div>
<span class="t st" style="left:525.2px;top:488.8px;color:#444;font-size:7.5px">406%</span>
<svg class="a" style="left:0;top:482px;" width="635" height="18" viewBox="0 482 635 18"><path d="M547.9 492.6H554.5" stroke="#6a6a6a" stroke-width="1"/><path d="M557.8 492.6H564.2M561.0 489.4V495.8" stroke="#6a6a6a" stroke-width="1"/></svg>
<span class="t st" style="left:572.6px;top:488.6px;">R:</span>
<div class="a" style="left:581.3px;top:482.6px;width:60px;height:21px;background:#fcfcfc;border:1px solid #e2e0de;border-radius:3px;box-sizing:border-box"></div>
<span class="t st" style="left:591.5px;top:488.8px;color:#444;font-size:7.5px">0.00°</span>
<svg class="a" style="left:0;top:482px;" width="635" height="18" viewBox="0 482 635 18"><path d="M614.2 492.6H620.8" stroke="#6a6a6a" stroke-width="1"/><path d="M624.5 492.6H630.9M627.7 489.4V495.8" stroke="#6a6a6a" stroke-width="1"/></svg>
<svg class="a" style="left:0;top:0;pointer-events:none;z-index:9" width="635" height="80" viewBox="0 0 635 80"><path d="M337.0 4.4C339.0 4.2 344.3 3.6 349.0 3.2C353.7 2.8 359.0 2.5 365.0 2.2C371.0 2.0 379.9 1.7 385.0 1.7C390.1 1.7 390.7 2.1 395.6 2.4C400.5 2.7 407.1 3.5 414.5 3.7C421.9 4.0 430.6 3.8 440.0 3.9C449.4 4.0 462.3 4.5 470.9 4.5C479.5 4.5 486.5 4.1 491.4 3.9C496.2 3.7 495.9 3.8 500.0 3.5C504.1 3.2 511.7 2.2 516.0 1.9C520.3 1.6 522.9 1.6 525.6 1.9C528.3 2.2 530.0 2.5 532.0 3.5C534.0 4.5 536.1 5.9 537.6 8.0C539.1 10.1 540.0 13.3 540.8 16.0C541.6 18.7 542.0 21.3 542.4 24.0C542.8 26.7 542.8 29.3 542.9 32.0C543.0 34.7 543.1 37.3 543.2 40.0C543.3 42.7 543.2 45.6 543.5 48.0C543.8 50.4 544.0 52.6 544.8 54.4C545.5 56.2 547.0 57.8 548.0 58.9C549.0 60.0 550.6 60.2 550.9 60.8C551.2 61.4 550.1 62.4 549.9 62.7" fill="none" stroke="#31d821" stroke-width="2.3" stroke-linecap="round" stroke-linejoin="round"/><path d="M549.9 62.7C549.0 62.8 547.8 63.0 544.8 63.2C541.8 63.4 536.8 63.6 532.0 63.7C527.2 63.8 521.3 63.9 516.0 64.0C510.7 64.1 505.8 64.2 500.0 64.3C494.2 64.4 485.4 64.5 481.2 64.5C476.9 64.5 476.7 64.5 474.5 64.6C472.3 64.7 470.1 65.0 468.0 65.3C465.9 65.6 463.6 66.1 461.9 66.6C460.2 67.1 459.3 67.8 458.0 68.2C456.7 68.7 457.0 69.0 454.0 69.3C451.0 69.6 444.5 69.8 440.0 70.0C435.5 70.2 432.8 70.2 427.0 70.3C421.2 70.4 412.0 70.5 405.0 70.4C398.0 70.3 391.4 70.0 385.0 69.9C378.6 69.8 371.3 70.0 366.6 69.8C361.9 69.6 360.5 69.2 357.0 68.5C353.5 67.8 349.0 66.8 345.8 65.6C342.6 64.4 339.7 63.2 337.8 61.6C335.9 60.0 335.0 58.3 334.3 56.0C333.6 53.7 333.6 52.0 333.8 48.0C334.0 44.0 334.9 37.3 335.4 32.0C335.9 26.7 336.4 20.6 336.7 16.0C337.0 11.4 337.1 6.9 337.0 4.5C336.9 2.1 336.3 1.9 336.2 1.4" fill="none" stroke="#31d821" stroke-width="2.3" stroke-linecap="round" stroke-linejoin="round"/></svg>
</div></body></html>
